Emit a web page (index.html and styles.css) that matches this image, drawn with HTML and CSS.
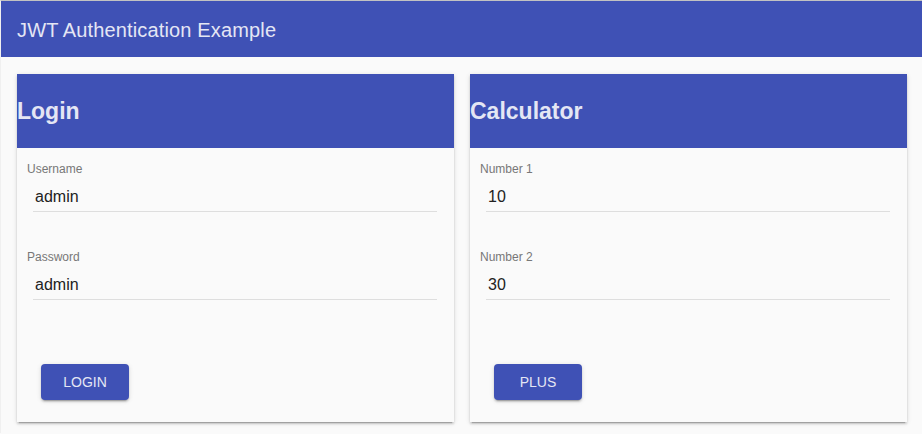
FILE: index.html
```html
<!DOCTYPE html>
<html>
<head>
<meta charset="utf-8">
<link rel="stylesheet" href="styles.css">
</head>
<body>
<div class="frame">
  <header class="toolbar">JWT Authentication Example</header>
  <main class="main">
    <section class="card">
      <h2 class="card-head">Login</h2>
      <div class="card-body">
        <div class="field">
          <label class="label">Username</label>
          <div class="value">admin</div>
        </div>
        <div class="field">
          <label class="label">Password</label>
          <div class="value">admin</div>
        </div>
        <button class="btn">Login</button>
      </div>
    </section>
    <section class="card">
      <h2 class="card-head">Calculator</h2>
      <div class="card-body">
        <div class="field">
          <label class="label">Number 1</label>
          <div class="value">10</div>
        </div>
        <div class="field">
          <label class="label">Number 2</label>
          <div class="value">30</div>
        </div>
        <button class="btn">Plus</button>
      </div>
    </section>
  </main>
</div>
</body>
</html>
```

FILE: styles.css
```css
html, body {
  margin: 0;
  padding: 0;
  background: #fafafa;
  font-family: "Liberation Sans", Arial, sans-serif;
}

.frame {
  border-top: 1px solid #c2c2c2;
  border-left: 1px solid #f0f0f0;
  min-height: 433px;
  box-sizing: border-box;
}

.toolbar {
  height: 56px;
  box-sizing: border-box;
  padding-top: 2px;
  background: #3f51b5;
  color: #e4e6f4;
  font-size: 20px;
  letter-spacing: 0.15px;
  display: flex;
  align-items: center;
  padding-left: 16px;
}

.main {
  display: grid;
  grid-template-columns: 1fr 1fr;
  gap: 16px;
  padding: 17px 15px 0 16px;
}

.card {
  background: #fafafa;
  height: 348px;
  box-shadow: 0 3px 1px -2px rgba(0,0,0,.2), 0 2px 2px 0 rgba(0,0,0,.14), 0 1px 5px 0 rgba(0,0,0,.12);
  display: flex;
  flex-direction: column;
}

.card-head {
  margin: 0;
  height: 74px;
  background: #3f51b5;
  color: #e4e6f4;
  font-size: 23px;
  font-weight: bold;
  display: flex;
  align-items: center;
  padding-top: 1px;
  box-sizing: border-box;
}

.card-body {
  padding: 14px 17px 0 0;
  display: flex;
  flex-direction: column;
  align-items: flex-start;
}

.field {
  align-self: stretch;
  margin-bottom: 38px;
}

.label {
  display: block;
  font-size: 12px;
  line-height: 14px;
  color: #777;
  padding-left: 10px;
}

.value {
  margin: 11px 0 0 16px;
  padding: 0 0 4px 2px;
  font-size: 16px;
  line-height: 20px;
  color: #222;
  border-bottom: 1px solid #dedede;
}

.field + .field {
  margin-bottom: 64px;
}

.btn {
  margin-left: 24px;
  width: 88px;
  height: 36px;
  border: none;
  border-radius: 4px;
  background: #3f51b5;
  color: #e4e6f4;
  font-family: "Liberation Sans", Arial, sans-serif;
  font-size: 14px;
  text-transform: uppercase;
  box-shadow: 0 3px 1px -2px rgba(0,0,0,.2), 0 2px 2px 0 rgba(0,0,0,.14), 0 1px 5px 0 rgba(0,0,0,.12);
  padding: 0;
}
```
